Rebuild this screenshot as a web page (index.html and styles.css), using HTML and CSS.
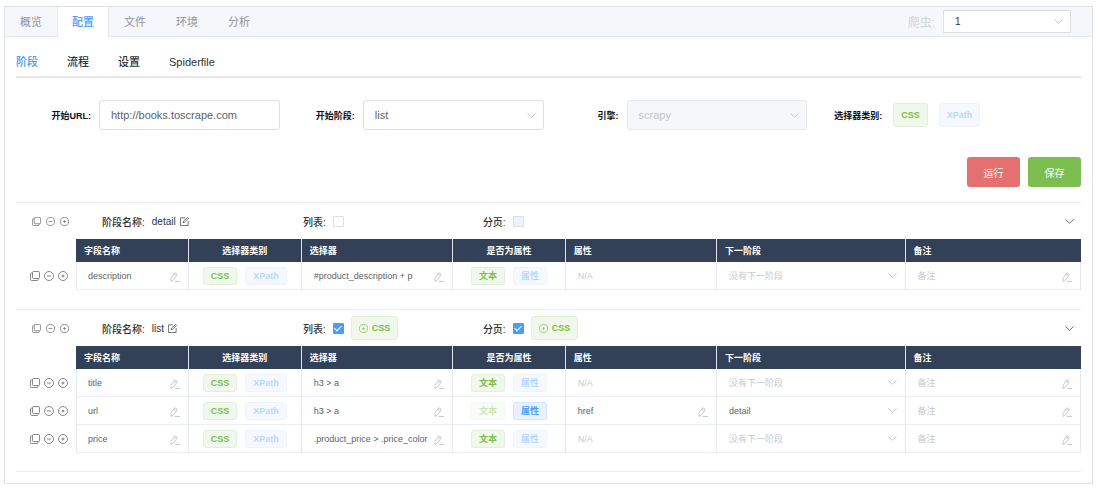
FILE: index.html
```
<!DOCTYPE html>
<html lang="zh">
<head>
  <meta charset="UTF-8">
  <title>爬虫配置</title>
  <link rel="stylesheet" href="styles.css">
</head>
<body>
  <svg class="sprite" aria-hidden="true">
    <symbol id="copy" viewBox="0 0 20 20"><path d="M7 1h10q2 0 2 2v10q0 2-2 2H7q-2 0-2-2V3q0-2 2-2z M5 4H3q-2 0-2 2v11q0 2 2 2h11q2 0 2-2v-2"/></symbol>
    <symbol id="minus" viewBox="0 0 20 20"><circle cx="10" cy="10" r="9"/><path d="M6 10h8"/></symbol>
    <symbol id="plus" viewBox="0 0 20 20"><circle cx="10" cy="10" r="9"/><path d="M7 10h6M10 7v6"/></symbol>
    <symbol id="edit" viewBox="0 0 20 20"><path d="M11 2H1v17h17V9 M7 13l1-4 9-8 2 2-9 9z"/></symbol>
    <symbol id="pencil" viewBox="0 0 20 20"><path d="M2 13L9 2q1-1 2 0l3 2q1 1 0 2L7 16l-5 3z M8 4l5 3 M10 19h10"/></symbol>
    <symbol id="down" viewBox="0 0 20 20"><path d="M1 5.500l9 8.500 9-8.500"/></symbol>
  </svg>

  <div class="card">
    <div class="tabs">
      <a class="tab" href="#">概览</a>
      <a class="tab active" href="#">配置</a>
      <a class="tab" href="#">文件</a>
      <a class="tab" href="#">环境</a>
      <a class="tab" href="#">分析</a>
      <div class="spider">
        <label for="spider">爬虫:</label>
        <div class="select spider-select">
          <select id="spider"><option>1</option></select>
          <svg class="arrow"><use href="#down"/></svg>
        </div>
      </div>
    </div>

    <div class="content">
      <nav class="menu">
        <a class="active" href="#">阶段</a>
        <a href="#">流程</a>
        <a href="#">设置</a>
        <a href="#">Spiderfile</a>
      </nav>

      <div class="form">
        <div class="item">
          <label for="url">开始URL:</label>
          <input class="box" type="text" id="url" value="http://books.toscrape.com">
        </div>
        <div class="item">
          <label for="start">开始阶段:</label>
          <div class="select">
            <select class="box" id="start"><option>list</option><option>detail</option></select>
            <svg class="arrow"><use href="#down"/></svg>
          </div>
        </div>
        <div class="item">
          <label for="engine">引擎:</label>
          <div class="select">
            <select class="box" id="engine" disabled><option>scrapy</option></select>
            <svg class="arrow"><use href="#down"/></svg>
          </div>
        </div>
        <div class="item">
          <span class="label">选择器类别:</span>
          <div class="tags">
            <button class="tag big green">CSS</button>
            <button class="tag big blue off">XPath</button>
          </div>
        </div>
      </div>

      <div class="buttons">
        <button class="btn danger">运行</button>
        <button class="btn success">保存</button>
      </div>

      <section class="stage">
        <div class="stage-head">
          <div class="actions">
            <button aria-label="复制"><svg><use href="#copy"/></svg></button>
            <button aria-label="删除"><svg><use href="#minus"/></svg></button>
            <button aria-label="添加"><svg><use href="#plus"/></svg></button>
          </div>
          <div class="name">
            <span>阶段名称:</span>
            <span>detail</span>
            <button aria-label="编辑"><svg><use href="#edit"/></svg></button>
          </div>
          <div class="check">
            <label for="list1">列表:</label>
            <input type="checkbox" id="list1">
          </div>
          <div class="check">
            <label for="page1">分页:</label>
            <input type="checkbox" id="page1" disabled>
          </div>
          <button class="fold" aria-label="折叠"><svg><use href="#down"/></svg></button>
        </div>
        <table>
          <colgroup>
            <col class="c-act"><col class="c-tag"><col class="c-tag"><col class="c-text"><col class="c-tag"><col class="c-text"><col class="c-next"><col>
          </colgroup>
          <thead>
            <tr><td></td><th>字段名称</th><th class="mid">选择器类别</th><th>选择器</th><th class="mid">是否为属性</th><th>属性</th><th>下一阶段</th><th>备注</th></tr>
          </thead>
          <tbody>
            <tr>
              <td>
                <div class="actions">
                  <button aria-label="复制"><svg><use href="#copy"/></svg></button>
                  <button aria-label="删除"><svg><use href="#minus"/></svg></button>
                  <button aria-label="添加"><svg><use href="#plus"/></svg></button>
                </div>
              </td>
              <td><div class="field"><input type="text" aria-label="字段名称" value="description"><svg><use href="#pencil"/></svg></div></td>
              <td><div class="tags"><button class="tag green">CSS</button><button class="tag blue off">XPath</button></div></td>
              <td><div class="field"><input type="text" aria-label="选择器" value="#product_description + p"><svg><use href="#pencil"/></svg></div></td>
              <td><div class="tags"><button class="tag green">文本</button><button class="tag blue off">属性</button></div></td>
              <td><div class="field"><input type="text" aria-label="属性" placeholder="N/A" disabled></div></td>
              <td><div class="select"><select class="empty" aria-label="下一阶段"><option>没有下一阶段</option><option>list</option></select><svg class="arrow"><use href="#down"/></svg></div></td>
              <td><div class="field"><input type="text" aria-label="备注" placeholder="备注"><svg><use href="#pencil"/></svg></div></td>
            </tr>
          </tbody>
        </table>
      </section>

      <section class="stage">
        <div class="stage-head">
          <div class="actions">
            <button aria-label="复制"><svg><use href="#copy"/></svg></button>
            <button aria-label="删除"><svg><use href="#minus"/></svg></button>
            <button aria-label="添加"><svg><use href="#plus"/></svg></button>
          </div>
          <div class="name">
            <span>阶段名称:</span>
            <span>list</span>
            <button aria-label="编辑"><svg><use href="#edit"/></svg></button>
          </div>
          <div class="check">
            <label for="list2">列表:</label>
            <input type="checkbox" id="list2" checked>
            <button class="tag big green"><svg><use href="#plus"/></svg>CSS</button>
          </div>
          <div class="check">
            <label for="page2">分页:</label>
            <input type="checkbox" id="page2" checked>
            <button class="tag big green"><svg><use href="#plus"/></svg>CSS</button>
          </div>
          <button class="fold" aria-label="折叠"><svg><use href="#down"/></svg></button>
        </div>
        <table>
          <colgroup>
            <col class="c-act"><col class="c-tag"><col class="c-tag"><col class="c-text"><col class="c-tag"><col class="c-text"><col class="c-next"><col>
          </colgroup>
          <thead>
            <tr><td></td><th>字段名称</th><th class="mid">选择器类别</th><th>选择器</th><th class="mid">是否为属性</th><th>属性</th><th>下一阶段</th><th>备注</th></tr>
          </thead>
          <tbody>
            <tr>
              <td>
                <div class="actions">
                  <button aria-label="复制"><svg><use href="#copy"/></svg></button>
                  <button aria-label="删除"><svg><use href="#minus"/></svg></button>
                  <button aria-label="添加"><svg><use href="#plus"/></svg></button>
                </div>
              </td>
              <td><div class="field"><input type="text" aria-label="字段名称" value="title"><svg><use href="#pencil"/></svg></div></td>
              <td><div class="tags"><button class="tag green">CSS</button><button class="tag blue off">XPath</button></div></td>
              <td><div class="field"><input type="text" aria-label="选择器" value="h3 &gt; a"><svg><use href="#pencil"/></svg></div></td>
              <td><div class="tags"><button class="tag green">文本</button><button class="tag blue off">属性</button></div></td>
              <td><div class="field"><input type="text" aria-label="属性" placeholder="N/A" disabled></div></td>
              <td><div class="select"><select class="empty" aria-label="下一阶段"><option>没有下一阶段</option><option>detail</option></select><svg class="arrow"><use href="#down"/></svg></div></td>
              <td><div class="field"><input type="text" aria-label="备注" placeholder="备注"><svg><use href="#pencil"/></svg></div></td>
            </tr>
            <tr>
              <td>
                <div class="actions">
                  <button aria-label="复制"><svg><use href="#copy"/></svg></button>
                  <button aria-label="删除"><svg><use href="#minus"/></svg></button>
                  <button aria-label="添加"><svg><use href="#plus"/></svg></button>
                </div>
              </td>
              <td><div class="field"><input type="text" aria-label="字段名称" value="url"><svg><use href="#pencil"/></svg></div></td>
              <td><div class="tags"><button class="tag green">CSS</button><button class="tag blue off">XPath</button></div></td>
              <td><div class="field"><input type="text" aria-label="选择器" value="h3 &gt; a"><svg><use href="#pencil"/></svg></div></td>
              <td><div class="tags"><button class="tag green off">文本</button><button class="tag blue">属性</button></div></td>
              <td><div class="field"><input type="text" aria-label="属性" value="href"><svg><use href="#pencil"/></svg></div></td>
              <td><div class="select"><select aria-label="下一阶段"><option>detail</option><option>没有下一阶段</option></select><svg class="arrow"><use href="#down"/></svg></div></td>
              <td><div class="field"><input type="text" aria-label="备注" placeholder="备注"><svg><use href="#pencil"/></svg></div></td>
            </tr>
            <tr>
              <td>
                <div class="actions">
                  <button aria-label="复制"><svg><use href="#copy"/></svg></button>
                  <button aria-label="删除"><svg><use href="#minus"/></svg></button>
                  <button aria-label="添加"><svg><use href="#plus"/></svg></button>
                </div>
              </td>
              <td><div class="field"><input type="text" aria-label="字段名称" value="price"><svg><use href="#pencil"/></svg></div></td>
              <td><div class="tags"><button class="tag green">CSS</button><button class="tag blue off">XPath</button></div></td>
              <td><div class="field"><input type="text" aria-label="选择器" value=".product_price &gt; .price_color"><svg><use href="#pencil"/></svg></div></td>
              <td><div class="tags"><button class="tag green">文本</button><button class="tag blue off">属性</button></div></td>
              <td><div class="field"><input type="text" aria-label="属性" placeholder="N/A" disabled></div></td>
              <td><div class="select"><select class="empty" aria-label="下一阶段"><option>没有下一阶段</option><option>detail</option></select><svg class="arrow"><use href="#down"/></svg></div></td>
              <td><div class="field"><input type="text" aria-label="备注" placeholder="备注"><svg><use href="#pencil"/></svg></div></td>
            </tr>
          </tbody>
        </table>
      </section>
    </div>
  </div>
</body>
</html>
```
FILE: styles.css
```
* {
  box-sizing: border-box;
}
body {
  margin: 6px 5px 6px 4px;
  background: #fff;
  color: #303133;
  font-family: "Liberation Sans", "Noto Sans CJK SC", sans-serif;
  font-size: 10px;
}
a {
  color: inherit;
  text-decoration: none;
}
button, input, select {
  margin: 0;
  padding: 0;
  border: 0;
  background: none;
  color: inherit;
  font: inherit;
}
svg {
  display: block;
  width: 9px;
  height: 9px;
  fill: none;
  stroke: currentColor;
  stroke-width: 2;
  flex: none;
}
.sprite {
  position: absolute;
  width: 0;
  height: 0;
}
.card {
  border: 1px solid #dfe2e9;
  box-shadow: 0 1px 4px rgba(0,0,0,0.2);
}

/* top tabs */
.tabs {
  display: flex;
  height: 30px;
  background: #f5f7fa;
  border-bottom: 1px solid #e4e7ed;
}
.tab {
  width: 52px;
  height: 30px;
  line-height: 30px;
  text-align: center;
  font-size: 11px;
  color: #909399;
}
.tab.active {
  background: #fff;
  color: #4a9cf8;
  border-left: 1px solid #e4e7ed;
  border-right: 1px solid #e4e7ed;
  font-weight: 500;
}
.spider {
  display: flex;
  align-items: center;
  gap: 8px;
  margin-left: auto;
  padding-right: 21px;
}
.spider label {
  font-size: 12px;
  color: #d3d5da;
}
.spider-select {
  width: 128px;
}
.spider-select select {
  height: 23px;
  padding-left: 11px;
  background: #fff;
  border: 1px solid #dcdfe6;
}

/* selects */
.select {
  position: relative;
  flex: 1;
}
.select select {
  display: block;
  width: 100%;
  appearance: none;
}
.arrow {
  position: absolute;
  right: 8px;
  top: 0;
  bottom: 0;
  margin: auto 0;
  color: #c0c4cc;
  pointer-events: none;
}

.content {
  padding: 14px 11px 11px;
}
.menu {
  display: flex;
  gap: 29px;
  height: 27px;
  border-bottom: 2px solid #e4e7ed;
  font-size: 11px;
  font-weight: 500;
  line-height: 23px;
}
.menu .active {
  color: #4a9cf8;
}

/* settings form */
.form {
  display: grid;
  grid-template-columns: repeat(4, 1fr);
  padding: 22px 10px 27px 0;
}
.item {
  display: flex;
  align-items: center;
  gap: 8px;
}
.item label, .item .label {
  width: 75px;
  text-align: right;
  font-size: 9px;
  font-weight: bold;
  color: #111;
}
.box {
  flex: 1;
  min-width: 0;
  height: 30px;
  padding: 0 11px;
  font-size: 11px;
  color: #606266;
  border: 1px solid #dcdfe6;
  border-radius: 3px;
}
.box:disabled {
  background: #f5f7fa;
  color: #c0c4cc;
  border-color: #e4e7ed;
  opacity: 1;
}
.item .tags {
  gap: 11px;
  padding-left: 3px;
}

/* tags */
.tags {
  display: flex;
  justify-content: center;
  gap: 8px;
}
.tag {
  display: flex;
  align-items: center;
  justify-content: center;
  gap: 4px;
  height: 18px;
  padding: 0 7px;
  border: 1px solid;
  border-radius: 3px;
  font-size: 9px;
  font-weight: bold;
}
.tag.big {
  height: 24px;
}
.green {
  background: #f0f7eb;
  border-color: #e1f0d8;
  color: #7abf4c;
}
.blue {
  background: #e8f2ff;
  border-color: #d3e6fd;
  color: #4a9cf8;
}
.off {
  opacity: 0.4;
}

.buttons {
  display: flex;
  justify-content: flex-end;
  gap: 8px;
  padding-bottom: 15px;
}
.btn {
  width: 53px;
  height: 30px;
  border-radius: 3px;
  color: #fff;
}
.danger {
  background: #e4716f;
}
.success {
  background: #7dbe50;
}

/* stages */
.stage {
  border-top: 1px solid #ebeef5;
  padding-bottom: 19px;
}
.stage:last-child {
  border-bottom: 1px solid #ebeef5;
  padding-bottom: 18px;
}
.stage-head {
  display: grid;
  grid-template-columns: 86px 19% 17% 1fr auto;
  align-items: center;
  height: 36px;
  padding-right: 7px;
  font-weight: 500;
}
.actions {
  display: flex;
  gap: 4px;
  padding-left: 14px;
  color: #606266;
}
.actions svg {
  width: 10px;
  height: 10px;
  stroke-width: 1.5;
}
.stage-head .actions {
  gap: 5px;
  padding-left: 16px;
}
.stage-head .actions svg {
  width: 9px;
  height: 9px;
}
.name {
  display: flex;
  align-items: center;
  gap: 7px;
}
.name button {
  margin-left: -3px;
}
.check {
  display: flex;
  align-items: center;
  gap: 7px;
}
input[type=checkbox] {
  display: grid;
  place-items: center;
  width: 11px;
  height: 11px;
  appearance: none;
  background: #fff;
  border: 1px solid #dcdfe6;
  border-radius: 1px;
}
input[type=checkbox]:disabled {
  background: #edf2fc;
}
input[type=checkbox]:checked {
  background: #4a9cf8;
  border-color: #4a9cf8;
}
input[type=checkbox]:checked::after {
  content: "";
  width: 3px;
  height: 6px;
  margin-bottom: 2px;
  border: solid #fff;
  border-width: 0 1px 1px 0;
  transform: rotate(45deg);
}
.tag svg, .name svg, .fold svg {
  stroke-width: 1.5;
}

table {
  width: 100%;
  table-layout: fixed;
  border-collapse: separate;
  border-spacing: 0;
  font-size: 9px;
  color: #606266;
}
.c-act {
  width: 60px;
}
.c-tag {
  width: 10.6%;
}
.c-text {
  width: 14.2%;
}
.c-next {
  width: 17.7%;
}
th {
  height: 23px;
  padding: 0 8px;
  background: #324157;
  border-right: 1px solid #dfe6ec;
  color: #fff;
  text-align: left;
}
th:last-child {
  border-right-color: #324157;
}
.mid {
  text-align: center;
}
td {
  height: 28px;
  padding: 0;
}
thead td {
  height: 23px;
}
tbody td + td {
  border-right: 1px solid #e4e7ed;
  border-bottom: 1px solid #ebeef5;
}
tbody td:nth-child(2) {
  border-left: 1px solid #e4e7ed;
}
.field {
  display: flex;
  align-items: center;
  padding: 0 8px 0 12px;
}
td:nth-child(2) .field {
  padding-left: 11px;
}
.field input {
  flex: 1;
  min-width: 0;
  height: 20px;
}
.field svg {
  margin-top: 3px;
  color: #b4b8c0;
  width: 10px;
  height: 10px;
  stroke-width: 1.5;
}
td select {
  height: 20px;
  padding-left: 12px;
}
.empty, ::placeholder {
  color: #c8cad0;
}
```
